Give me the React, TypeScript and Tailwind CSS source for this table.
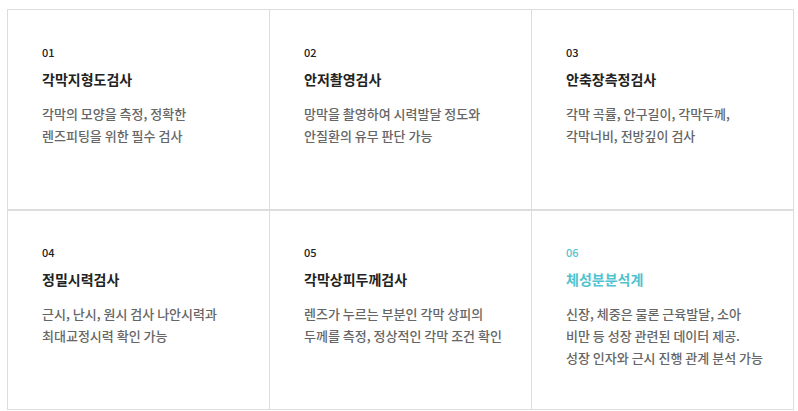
import React from "react";

const items = [
  { n: "01", t: "각막지형도검사", d: ["각막의 모양을 측정, 정확한", "렌즈피팅을 위한 필수 검사"] },
  { n: "02", t: "안저촬영검사", d: ["망막을 촬영하여 시력발달 정도와", "안질환의 유무 판단 가능"] },
  { n: "03", t: "안축장측정검사", d: ["각막 곡률, 안구길이, 각막두께,", "각막너비, 전방깊이 검사"] },
  { n: "04", t: "정밀시력검사", d: ["근시, 난시, 원시 검사 나안시력과", "최대교정시력 확인 가능"] },
  { n: "05", t: "각막상피두께검사", d: ["렌즈가 누르는 부분인 각막 상피의", "두께를 측정, 정상적인 각막 조건 확인"] },
  {
    n: "06",
    t: "체성분분석계",
    d: ["신장, 체중은 물론 근육발달, 소아", "비만 등 성장 관련된 데이터 제공.", "성장 인자와 근시 진행 관계 분석 가능"],
    hl: true,
  },
];

export default function App() {
  return (
    <div
      className="w-[798px] h-[411px] bg-white pl-[7px] pt-[9px]"
      style={{ fontFamily: '"Noto Sans CJK KR", "Noto Sans", sans-serif' }}
    >
      <div className="grid grid-cols-3 w-[787px] border-l border-t border-[#dddddd]">
        {items.map((it, i) => (
          <div
            key={it.n}
            className={
              i < 3
                ? "h-[200px] border-r border-b border-[#dddddd] pl-[34px] pt-[34px]"
                : "h-[200px] border-r border-b border-t border-[#dddddd] pl-[34px] pt-[33px]"
            }
          >
            <div
              className={
                it.hl
                  ? "text-[11px] leading-[16px] font-medium text-[#4fc3d0]"
                  : "text-[11px] leading-[16px] font-medium text-[#222222]"
              }
            >
              {it.n}
            </div>
            <div
              className={
                it.hl
                  ? "mt-[8px] text-[14px] leading-[22px] font-bold text-[#4fc3d0]"
                  : "mt-[8px] text-[14px] leading-[22px] font-bold text-[#222222]"
              }
            >
              {it.t}
            </div>
            <div className="mt-[13px] text-[13px] leading-[22px] font-medium text-[#666666]">
              {it.d.map((l) => (
                <div key={l}>{l}</div>
              ))}
            </div>
          </div>
        ))}
      </div>
    </div>
  );
}
